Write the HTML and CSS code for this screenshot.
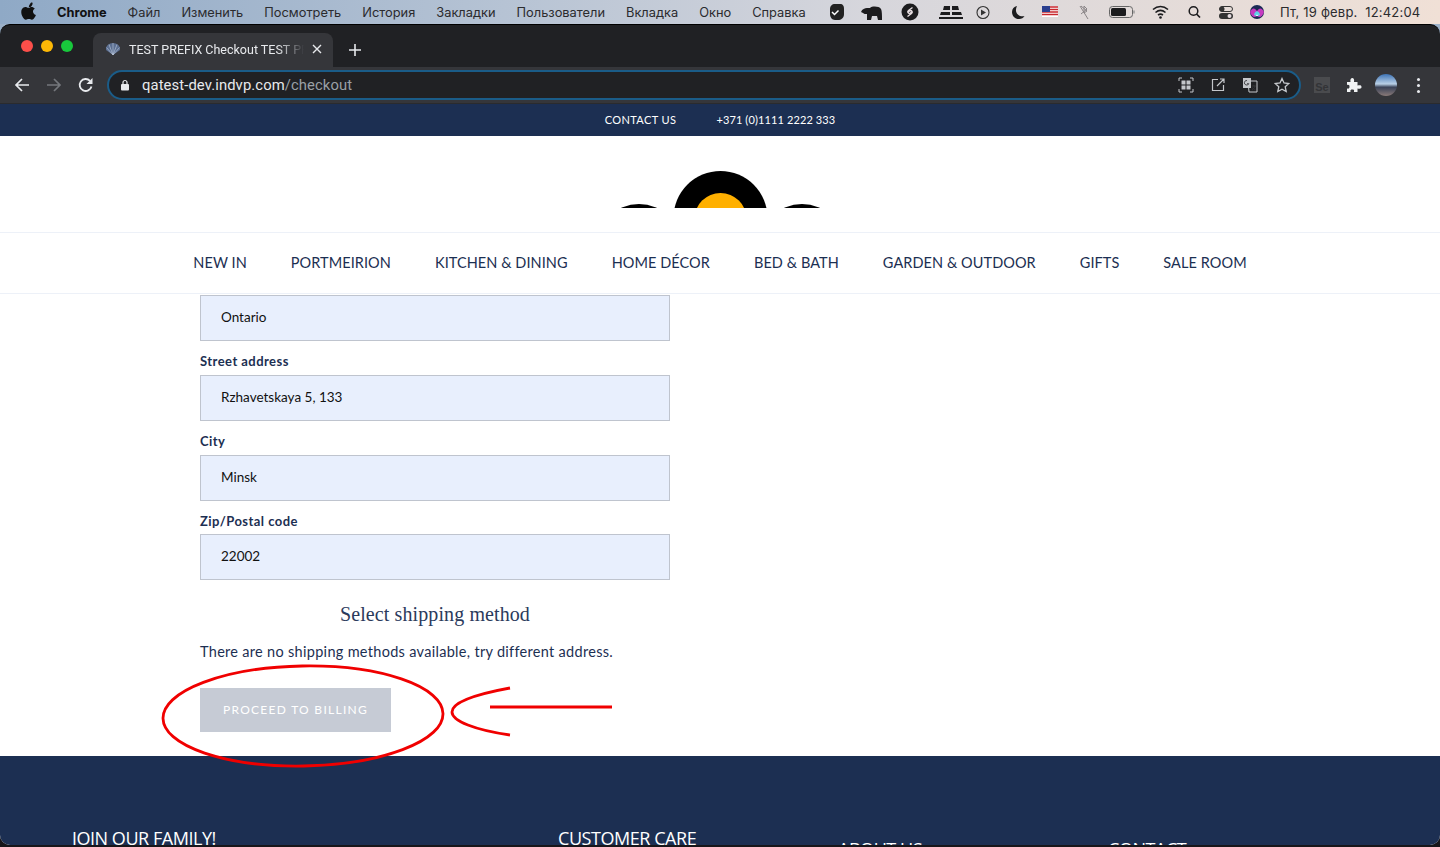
FILE: index.html
```html
<!DOCTYPE html>
<html lang="en">
<head>
  <meta charset="UTF-8" />
  <meta name="viewport" content="width=device-width, initial-scale=1.0"/>
  <title>Checkout</title>
  <link rel="stylesheet" href="styles.css">
</head>
<body>

  <div class="menubar">
    <svg class="apple" width="16" height="18" viewBox="0 0 16 18"><path d="M11.6 1c.1 1.100-.3 2.100-1 2.900-.7.800-1.700 1.300-2.700 1.200-.1-1 .4-2.100 1-2.800C9.600.6 10.700.1 11.600 1zM14.900 13c-.4 1-.6 1.400-1.100 2.200-.7 1.100-1.700 2.500-3 2.500-1.100 0-1.400-.7-2.900-.7s-1.900.7-3 .7c-1.300 0-2.200-1.200-2.900-2.300C0 12.300-.2 8.800 1 7c.8-1.300 2.100-2 3.400-2 1.200 0 2 .8 3.100.8 1 0 1.600-.8 3.100-.8 1.100 0 2.300.6 3.200 1.700-2.800 1.500-2.300 5.400 1.100 6.300z"/></svg>
    <div class="menu-items">
      <span class="menu-app">Chrome</span>
      <span>Файл</span>
      <span>Изменить</span>
      <span>Посмотреть</span>
      <span>История</span>
      <span>Закладки</span>
      <span>Пользователи</span>
      <span>Вкладка</span>
      <span>Окно</span>
      <span>Справка</span>
    </div>
    <!-- tray icons, x = screen x minus 820 -->
    <svg class="tray" width="450" height="24" viewBox="0 0 450 24">
      <path d="M11 4h5c3 0 4 2 4 5v5c0 4-3 6-6 6h-3c-3 0-5-3-5-6V9c0-3 2-5 5-5z" fill="#222" transform="translate(4 0)"/>
      <path d="M12 12l2.500 2.500 4-4" fill="none" stroke="#fff" stroke-width="1.500"/>
      <path d="M41 12c1-3 4-4 6-4h3c2-2 9-2 11 1 1 2 1 6 1 11h-4l-1-4h-5l-1 4h-4v-6c-2 0-3 0-4-1z" fill="#1c1c1e"/>
      <circle cx="90" cy="12" r="8.500" fill="#1c1c1e"/>
      <path d="M92.500 7.500l-4 3c-1.500 1.200-.5 3 1.200 3l2-1.500M87.500 16.500l4-3c1.500-1.200.5-3-1.200-3l-2 1.500" fill="none" stroke="#e6dde0" stroke-width="1.400"/>
      <path d="M124 6h6v4h-7zM132 6h6l1 4h-7zM121 12h9v3h-10zM132 12h9l1 3h-10zM119 17h24v2h-24z" fill="#1c1c1e"/>
      <circle cx="163" cy="12.500" r="6" fill="none" stroke="#333" stroke-width="1.100"/>
      <path d="M161 9.500l5 3-5 3z" fill="#333"/>
      <path d="M197 6c-3 .5-5 3-5 6 0 4 3 7 7 7 2.500 0 4.500-1 5.500-3-4 1-8-1-8.500-5-.2-2 .2-3.500 1-5z" fill="#1c1c1e"/>
      <rect x="222" y="6" width="16" height="11" fill="#fff"/>
      <path d="M222 7h16M222 9.500h16M222 12h16M222 14.500h16" stroke="#c8262c" stroke-width="1.300"/>
      <rect x="222" y="6" width="8" height="6" fill="#2a3f8f"/>
      <path d="M261 6l6 5-3 2V6l3 3-6 5M260 6l8 13" fill="none" stroke="#8a8587" stroke-width="1"/>
      <rect x="289.500" y="6.500" width="23" height="11" rx="3" fill="none" stroke="#666" stroke-width="1"/>
      <rect x="291" y="8" width="15" height="8" rx="1.500" fill="#1c1c1e"/>
      <path d="M314 10.500v3" stroke="#888" stroke-width="1.200"/>
      <path d="M333 9.500c4.500-4 10.500-4 15 0M335.500 12.500c3-2.500 7-2.500 10 0M338 15c1.500-1 3.500-1 5 0" fill="none" stroke="#1c1c1e" stroke-width="1.600"/>
      <circle cx="340.500" cy="17.500" r="1.300" fill="#1c1c1e"/>
      <circle cx="373.500" cy="11" r="4.300" fill="none" stroke="#1c1c1e" stroke-width="1.500"/>
      <path d="M376.500 14l3.500 3.500" stroke="#1c1c1e" stroke-width="1.700"/>
      <rect x="399.500" y="6.500" width="13" height="5" rx="2.500" fill="none" stroke="#333" stroke-width="1"/>
      <circle cx="402" cy="9" r="2.500" fill="#333"/>
      <rect x="399" y="13" width="14" height="6" rx="3" fill="#333"/>
      <circle cx="409.500" cy="16" r="2" fill="#e6dde0"/>
      <circle cx="437" cy="12" r="7" fill="#1b2a55"/>
      <path d="M430 12c2-4 4-5 7-1 3-4 5-3 7 1-2 5-4 6-7 4-3 2-5 1-7-4z" fill="#c63bc0"/>
      <path d="M434 15c1-5 5-5 6 0-2 1.500-4 1.500-6 0z" fill="#5cd6e8"/>
      <path d="M436 16c.5-2 1.500-2 2 0z" fill="#fff"/>
    </svg>
    <span class="clock">Пт, 19 февр.&nbsp;&nbsp;12:42:04</span>
  </div>

  <div class="window">

    <div class="tabstrip">
      <div class="lights">
        <i class="light red"></i>
        <i class="light yellow"></i>
        <i class="light green"></i>
      </div>
      <div class="tab">
        <svg width="16" height="16" viewBox="0 0 16 16"><path d="M8 14L1 9c-.6-4 3-7 7-7s7.600 3 7 7z" fill="#5b6f92"/><path d="M8 14L4 3.500M8 14V2M8 14l4-10.500M8 14L1.500 6.500M8 14l6.500-7.500" stroke="#c0cbdc" stroke-width=".6" fill="none"/></svg>
        <span class="tab-title">TEST PREFIX Checkout TEST PREFIX</span>
        <svg class="tab-close" width="10" height="10" viewBox="0 0 10 10"><path d="M1 1l8 8M9 1l-8 8" stroke="#e8eaed" stroke-width="1.400"/></svg>
      </div>
      <svg class="new-tab" width="12" height="12" viewBox="0 0 12 12"><path d="M6 0v12M0 6h12" stroke="#e8eaed" stroke-width="1.600"/></svg>
    </div>

    <div class="toolbar">
      <div class="nav-btns">
        <svg width="16" height="16" viewBox="0 0 16 16"><path d="M15 8H2M8 2L2 8l6 6" fill="none" stroke="#e8eaed" stroke-width="1.700"/></svg>
        <svg width="16" height="16" viewBox="0 0 16 16"><path d="M1 8h13M8 2l6 6-6 6" fill="none" stroke="#74777c" stroke-width="1.700"/></svg>
        <svg width="16" height="16" viewBox="0 0 16 16"><path d="M13.500 9.500A6 6 0 1 1 12 3.800" fill="none" stroke="#e8eaed" stroke-width="1.800"/><path d="M14.500 1v6h-6z" fill="#e8eaed"/></svg>
      </div>
      <div class="omnibox">
        <svg width="10" height="12" viewBox="0 0 10 12"><rect x="1" y="5" width="8" height="6.500" rx="1" fill="#e8eaed"/><path d="M3 5V3.500a2 2 0 0 1 4 0V5" fill="none" stroke="#e8eaed" stroke-width="1.200"/></svg>
        <span class="url"><b>qatest-dev.indvp.com</b>/checkout</span>
        <div class="omni-icons">
          <span class="slot"><svg width="16" height="16" viewBox="0 0 16 16"><path d="M1 4V1h3M12 1h3v3M15 12v3h-3M4 15H1v-3" fill="none" stroke="#c4c7cb" stroke-width="1"/><path d="M3.500 3.500h4v4h-4zM8.500 3.500h4v4h-4zM3.500 8.500h4v4h-4zM8.500 8.500h4v4h-4z" fill="#c4c7cb"/></svg></span>
          <span class="slot"><svg width="14" height="14" viewBox="0 0 14 14"><path d="M7 1.500H1.500v11h11V7M6 8l7-7M9 1h4v4" fill="none" stroke="#c4c7cb" stroke-width="1.200"/></svg></span>
          <span class="slot"><svg width="16" height="16" viewBox="0 0 16 16"><path d="M6 4h9v11H7z" fill="none" stroke="#c4c7cb"/><rect x="1" y="1" width="8" height="10" fill="#c4c7cb"/><path d="M5 3.500a2.300 2.300 0 1 0 1.800 3.200H5M10 9h4M12 8v1M13 9c-.5 2-1.500 3-3 4M10.500 10.500c.7 1.300 2 2.500 3 2.500" fill="none" stroke="#35363a" stroke-width=".9"/></svg></span>
          <span class="slot"><svg width="16" height="16" viewBox="0 0 16 16"><path d="M8 1.500l2 4.500 4.800.5-3.600 3.200 1 4.800L8 12.200l-4.200 2.300 1-4.800L1.200 6.500 6 6z" fill="none" stroke="#c4c7cb" stroke-width="1.300"/></svg></span>
        </div>
      </div>
      <div class="ext-icons">
        <span class="slot"><span class="se-badge">Se</span></span>
        <span class="slot"><svg width="16" height="16" viewBox="0 0 16 16"><path d="M1 5h3.500C4 2 5 1 6.300 1S8.500 2 8 5h3.500v3.500c3-.5 4-.2 4 1.500s-1 2-4 1.500V15H8c.5-2-.3-2.500-1.700-2.500S4 13 4.500 15H1v-3.500c2 .5 2.500-.5 2.500-1.800S3 7.500 1 8z" fill="#f1f3f4"/></svg></span>
        <span class="slot"><span class="avatar"></span></span>
        <span class="slot"><span class="dots"></span></span>
      </div>
    </div>

    <div class="page">
      <div class="contact-bar">
        <span class="contact-link">CONTACT US</span>
        <span class="contact-phone">+371 (0)1111 2222 333</span>
      </div>

      <header class="logo-row">
        <svg width="224" height="48" viewBox="608 160 224 48">
          <circle cx="639" cy="246.500" r="42.500"/>
          <circle cx="802" cy="246.500" r="42.500"/>
          <circle cx="720.500" cy="218" r="47"/>
          <circle cx="720.500" cy="219" r="26" fill="#ffb000"/>
        </svg>
      </header>

      <nav class="main-nav">
        <a>NEW IN</a>
        <a>PORTMEIRION</a>
        <a>KITCHEN &amp; DINING</a>
        <a>HOME DÉCOR</a>
        <a>BED &amp; BATH</a>
        <a>GARDEN &amp; OUTDOOR</a>
        <a>GIFTS</a>
        <a>SALE ROOM</a>
      </nav>

      <main class="checkout">
        <div class="field-box">Ontario</div>
        <label class="field-label">Street address</label>
        <div class="field-box">Rzhavetskaya 5, 133</div>
        <label class="field-label">City</label>
        <div class="field-box">Minsk</div>
        <label class="field-label field-label-short">Zip/Postal code</label>
        <div class="field-box">22002</div>

        <h3 class="shipping-title">Select shipping method</h3>
        <p class="shipping-msg">There are no shipping methods available, try different address.</p>
        <button class="proceed" type="button">PROCEED TO BILLING</button>
      </main>

      <footer class="site-footer">
        <h4>JOIN OUR FAMILY!</h4>
        <h4>CUSTOMER CARE</h4>
        <h5>ABOUT US</h5>
        <h5>CONTACT</h5>
      </footer>
    </div>
  </div>

  <!-- red marker drawn on top of the screenshot -->
  <svg class="marker" width="1440" height="847" viewBox="0 0 1440 847">
    <ellipse cx="303" cy="716" rx="140" ry="50" transform="rotate(-1 303 716)"/>
    <path d="M510 688C472 695 452 703 452 712C452 721 475 730 510 735"/>
    <path d="M490 707H612"/>
  </svg>

</body>
</html>
```

FILE: styles.css
```css
* {
  box-sizing: border-box;
}
html, body {
  margin: 0;
  height: 847px;
  overflow: hidden;
}
body {
  position: relative;
  background: linear-gradient(#9bb0c8 40px, #17161a 40px);
  font-family: "Lato", sans-serif;
}

/* mac menu bar */
.menubar {
  height: 24px;
  display: flex;
  align-items: center;
  background: linear-gradient(90deg, #8fa9c6 0%, #b6c3d4 35%, #d6d6dc 60%, #f0e0d6 100%);
  font-family: "Inter", sans-serif;
  font-size: 12.830px;
  color: #2b2b2e;
  position: relative;
}
.apple {
  margin-left: 21px;
  margin-top: -2px;
  fill: #111;
}
.menu-items {
  display: flex;
  gap: 21px;
  margin-left: 20px;
}
.menu-app {
  font-weight: 700;
  color: #111;
}
.tray {
  position: absolute;
  left: 820px;
  top: 0;
}
.clock {
  position: absolute;
  left: 1280px;
  top: 4px;
  font-size: 13px;
  letter-spacing: 0.2px;
}

/* browser chrome */
.window {
  height: 821px;
  background: #202124;
  border-radius: 10px;
  border-top: 1px solid #000;
  overflow: hidden;
}
.tabstrip {
  height: 42px;
  display: flex;
  align-items: flex-end;
  position: relative;
}
.lights {
  display: flex;
  gap: 8px;
  position: absolute;
  left: 21px;
  top: 15px;
}
.light {
  width: 12px;
  height: 12px;
  border-radius: 50%;
}
.light.red { background: #fc4f4a; }
.light.yellow { background: #fdb806; }
.light.green { background: #18c83c; }
.tab {
  margin-left: 93px;
  width: 240px;
  height: 34px;
  background: #35363a;
  border-radius: 8px 8px 0 0;
  display: flex;
  align-items: center;
  padding: 0 11px 2px 12px;
  color: #e8eaed;
  font-family: "Roboto", sans-serif;
  font-size: 12.500px;
}
.tab-title {
  width: 175px;
  margin-left: 8px;
  white-space: nowrap;
  overflow: hidden;
  -webkit-mask-image: linear-gradient(90deg, #000 85%, transparent 100%);
  mask-image: linear-gradient(90deg, #000 85%, transparent 100%);
}
.tab-close {
  margin-left: 8px;
}
.new-tab {
  margin: 0 0 11px 16px;
}
.toolbar {
  height: 37px;
  background: #35363a;
  border-bottom: 1px solid #2a2b2e;
  display: flex;
  align-items: center;
}
.nav-btns {
  width: 107px;
  display: flex;
  gap: 16px;
  padding-left: 14px;
}
.omnibox {
  width: 1194px;
  height: 30px;
  border: 2px solid #1a5c88;
  border-radius: 15px;
  background: #202124;
  display: flex;
  align-items: center;
  padding-left: 11px;
}
.url {
  margin-left: 12px;
  font-family: "Roboto", sans-serif;
  font-size: 14.800px;
  color: #9aa0a6;
  letter-spacing: 0.1px;
}
.url b {
  font-weight: 400;
  color: #e8eaed;
}
.omni-icons {
  margin-left: auto;
  margin-right: 1px;
  display: flex;
}
.slot {
  width: 32px;
  height: 20px;
  display: flex;
  align-items: center;
  justify-content: center;
}
.ext-icons {
  margin-left: 5px;
  display: flex;
}
.se-badge {
  width: 16px;
  height: 16px;
  background: #4a4b4e;
  color: #333437;
  font: 700 11px/20px "Liberation Sans", sans-serif;
  text-align: center;
}
.avatar {
  width: 22px;
  height: 22px;
  border-radius: 50%;
  background: linear-gradient(#3d73b5 0%, #b9d0e6 45%, #3a4358 60%, #8a7a78 100%);
}
.dots {
  width: 3px;
  height: 3px;
  border-radius: 50%;
  background: #e8eaed;
  box-shadow: 0 -6px 0 #e8eaed, 0 6px 0 #e8eaed;
}

/* site */
.page {
  height: 741px;
  background: #fff;
  overflow: hidden;
}
.contact-bar {
  height: 32px;
  padding: 0 0 2px 0;
  background: #1c2f52;
  color: #fff;
  font-size: 11px;
  display: flex;
  justify-content: center;
  align-items: center;
  gap: 40px;
}
.contact-link {
  letter-spacing: 0.4px;
}
.contact-phone {
  letter-spacing: 0.12px;
}
.logo-row {
  height: 96px;
  display: flex;
  justify-content: center;
  padding-top: 24px;
}
.main-nav {
  height: 62px;
  padding-bottom: 2px;
  border-top: 1px solid #edf1f8;
  border-bottom: 1px solid #edf1f8;
  display: flex;
  justify-content: center;
  align-items: center;
  gap: 44px;
  font-size: 14.500px;
  letter-spacing: 0.07px;
  color: #1c2f52;
}
.checkout {
  width: 470px;
  height: 462px;
  margin-left: 200px;
  padding-top: 1px;
  color: #1c2f52;
}
.field-box {
  height: 46px;
  background: #e8effd;
  border: 1px solid #bfc4ce;
  padding: 0 0 3px 20px;
  display: flex;
  align-items: center;
  font-size: 13.500px;
  color: #111;
}
.field-label {
  display: block;
  height: 34px;
  padding-top: 11px;
  font-size: 13px;
  font-weight: 700;
  letter-spacing: 0.45px;
  line-height: 18px;
}
.field-label-short {
  height: 33px;
}
.shipping-title {
  margin: 22px 0 0;
  font-family: "Liberation Serif", serif;
  font-size: 20px;
  font-weight: 400;
  line-height: 24px;
  letter-spacing: 0.1px;
  text-align: center;
  color: #2b3a5c;
}
.shipping-msg {
  margin: 16px 0 0;
  font-size: 14.500px;
  line-height: 20px;
  letter-spacing: 0.3px;
}
.proceed {
  display: block;
  width: 191px;
  height: 44px;
  margin-top: 26px;
  padding: 0 0 2px;
  background: #c6cbd5;
  border: none;
  color: #fff;
  font-family: "Lato", sans-serif;
  font-size: 12px;
  letter-spacing: 1.280px;
}
.site-footer {
  height: 100px;
  background: #1c2f52;
  color: #fff;
  position: relative;
}
.site-footer h4, .site-footer h5 {
  margin: 0;
  position: absolute;
  font-family: "Open Sans", sans-serif;
  font-weight: 400;
  font-size: 18px;
  line-height: 20px;
  letter-spacing: -0.45px;
  white-space: nowrap;
}
.site-footer h4 { top: 72px; }
.site-footer h5 { top: 83px; }
.site-footer h4:nth-child(1) { left: 72px; }
.site-footer h4:nth-child(2) { left: 558px; }
.site-footer h5:nth-child(3) { left: 838px; }
.site-footer h5:nth-child(4) { left: 1108px; }

/* annotation */
.marker {
  position: absolute;
  left: 0;
  top: 0;
  fill: none;
  stroke: #f00000;
  stroke-width: 2.800;
  pointer-events: none;
}
```
